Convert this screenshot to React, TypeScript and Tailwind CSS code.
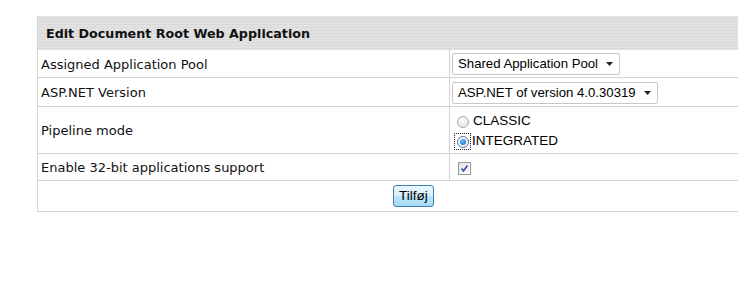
import React from "react";

function FakeSelect({ label }: { label: string }) {
  return (
    <div
      className="flex items-center h-[22px] border border-[#c8c8c8] rounded-[2px] bg-white pl-[5px] pr-[6px] text-[13.2px] text-black whitespace-nowrap"
      style={{ fontFamily: '"Liberation Sans", Arial, sans-serif' }}
    >
      <span className="whitespace-nowrap">{label}</span>
      <svg width="7" height="4" viewBox="0 0 7 4" className="ml-[8px] shrink-0">
        <path d="M0 0 L7 0 L3.5 4 Z" fill="#222" />
      </svg>
    </div>
  );
}

export default function App() {
  const verdana = { fontFamily: '"DejaVu Sans", Verdana, sans-serif' };
  const arial = { fontFamily: '"Liberation Sans", Arial, sans-serif' };
  return (
    <div className="w-[753px] h-[286px] bg-white">
      <div className="pt-[16px] pl-[37px]">
        <div className="w-[701px] border-l border-[#d4d4d4] text-[#111]" style={verdana}>
          <div className="h-[34px] flex items-center pl-[8px] pt-[2px] font-bold text-[12.7px] bg-[repeating-linear-gradient(180deg,#e2e2e2_0px,#e2e2e2_2px,#d9d9d9_2px,#d9d9d9_3px)]">
            Edit Document Root Web Application
          </div>
          <div className="flex h-[28px] border-b border-[#d4d4d4]">
            <div className="w-[412px] border-r border-[#d4d4d4] flex items-center pl-[3px] pt-[2px] text-[13px]">
              Assigned Application Pool
            </div>
            <div className="flex items-center pl-[2px]">
              <FakeSelect label="Shared Application Pool" />
            </div>
          </div>
          <div className="flex h-[29px] border-b border-[#d4d4d4]">
            <div className="w-[412px] border-r border-[#d4d4d4] flex items-center pl-[3px] pt-[2px] text-[13px]">
              ASP.NET Version
            </div>
            <div className="flex items-center pl-[2px] pt-[1px]">
              <FakeSelect label="ASP.NET of version 4.0.30319" />
            </div>
          </div>
          <div className="flex h-[47px] border-b border-[#d4d4d4]">
            <div className="w-[412px] border-r border-[#d4d4d4] flex items-center pl-[3px] pt-[2px] text-[13px]">
              Pipeline mode
            </div>
            <div className="flex flex-col justify-center pl-[4px] pt-[3px] text-[13.5px] text-black gap-[3px]" style={arial}>
              <div className="flex items-center h-[17px]">
                <span className="w-[17px] h-[17px] flex items-center justify-center">
                  <span className="w-[12px] h-[12px] rounded-full border border-[#a8a8a8] bg-[radial-gradient(circle_at_40%_35%,#ffffff,#dcdcdc)]" />
                </span>
                <span className="ml-[2px]">CLASSIC</span>
              </div>
              <div className="flex items-center h-[17px]">
                <span className="w-[17px] h-[17px] flex items-center justify-center border border-dotted border-[#222]">
                  <span className="w-[12px] h-[12px] rounded-full border border-[#5b7fa3] bg-[#eef3f8] flex items-center justify-center">
                    <span className="w-[6px] h-[6px] rounded-full bg-[radial-gradient(circle_at_40%_35%,#6fc0ff,#0c5ea8)]" />
                  </span>
                </span>
                <span className="ml-[1px]">INTEGRATED</span>
              </div>
            </div>
          </div>
          <div className="flex h-[27px] border-b border-[#d4d4d4]">
            <div className="w-[412px] border-r border-[#d4d4d4] flex items-center pl-[3px] pt-[1px] text-[13px]">
              Enable 32-bit applications support
            </div>
            <div className="flex items-center pl-[8px] pt-[3px]">
              <span className="w-[13px] h-[13px] border border-[#9a9a9a] bg-[linear-gradient(135deg,#e4e4e4,#ffffff)] flex items-center justify-center">
                <svg width="9" height="9" viewBox="0 0 9 9">
                  <path d="M1.5 4.5 L3.5 7 L7.5 1.5" stroke="#2a4fb0" strokeWidth="1.6" fill="none" />
                </svg>
              </span>
            </div>
          </div>
          <div className="flex h-[31px] border-b border-[#d4d4d4] items-center pl-[355px]">
            <button
              className="h-[22px] px-[5px] text-[13.5px] text-black border border-[#3c7fb1] rounded-[3px] bg-[linear-gradient(180deg,#eaf6fd,#d9f0fc_50%,#bee6fd_51%,#a7d9f5)]"
              style={arial}
            >
              Tilføj
            </button>
          </div>
        </div>
      </div>
    </div>
  );
}
